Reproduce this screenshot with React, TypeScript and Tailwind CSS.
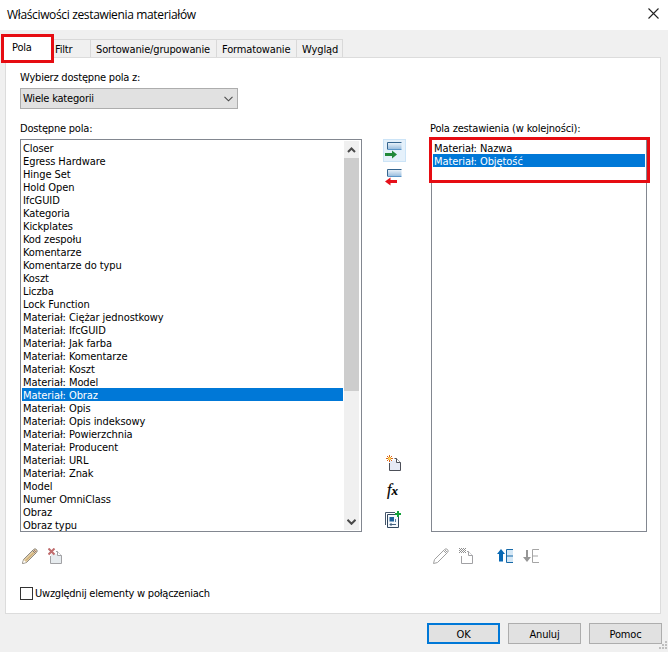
import type { ReactNode } from 'react'
import clsx from 'clsx'

const availableFields = [
  'Closer',
  'Egress Hardware',
  'Hinge Set',
  'Hold Open',
  'IfcGUID',
  'Kategoria',
  'Kickplates',
  'Kod zespołu',
  'Komentarze',
  'Komentarze do typu',
  'Koszt',
  'Liczba',
  'Lock Function',
  'Materiał: Ciężar jednostkowy',
  'Materiał: IfcGUID',
  'Materiał: Jak farba',
  'Materiał: Komentarze',
  'Materiał: Koszt',
  'Materiał: Model',
  'Materiał: Obraz',
  'Materiał: Opis',
  'Materiał: Opis indeksowy',
  'Materiał: Powierzchnia',
  'Materiał: Producent',
  'Materiał: URL',
  'Materiał: Znak',
  'Model',
  'Numer OmniClass',
  'Obraz',
  'Obraz typu',
]

const scheduledFields = ['Materiał: Nazwa', 'Materiał: Objętość']

function FieldList({ items, selected }: { items: string[]; selected: string }) {
  return (
    <ul className="min-w-0 flex-1 tracking-[-0.08px]">
      {items.map((item) => (
        <li
          key={item}
          className={clsx(
            'h-[13px] pl-px leading-[15px] whitespace-nowrap',
            item === selected && 'bg-[#0078d7] text-white'
          )}
        >
          {item}
        </li>
      ))}
    </ul>
  )
}

function Icon({ children, size = 16 }: { children: ReactNode; size?: number }) {
  return (
    <svg width={size} height={size} viewBox={`0 0 ${size} ${size}`} fill="none" className="block shrink-0">
      {children}
    </svg>
  )
}

function RowGlyph() {
  return (
    <>
      <defs>
        <linearGradient id="row" x1="0" y1="0" x2="0" y2="1">
          <stop offset="0" stopColor="#f4f9fd" />
          <stop offset="1" stopColor="#9cbfdf" />
        </linearGradient>
      </defs>
      <path d="M2.5 0h14v7h-14z" fill="url(#row)" />
      <path d="M16.5 .5h-14v7" stroke="#35658f" />
      <path d="M3 7.5h13.5" stroke="#5b96c9" />
    </>
  )
}

function AddFieldIcon() {
  return (
    <Icon size={18}>
      <RowGlyph />
      <path d="M0 11h7V8.500l5 4-5 4V14H0z" fill="#218a3a" />
    </Icon>
  )
}

function RemoveFieldIcon() {
  return (
    <Icon size={18}>
      <RowGlyph />
      <path d="M12 11H5.500V8.500l-5.500 4 5.500 4V14H12z" fill="#e5101a" />
    </Icon>
  )
}

function NewParameterIcon() {
  return (
    <Icon>
      <path d="M3.500 15.500V5.500h7l4 3v7z" fill="#e6eaf5" />
      <path d="M3.500 8v7.500h11v-8l-4-4h-2" stroke="#4c4f58" />
      <path d="M10.500 3.500v4h4" fill="#fff" stroke="#4c4f58" />
      <path d="M3.500 0v7M0 3.500h7M1 1l5 5M6 1L1 6" stroke="#d9651b" />
      <circle cx="3.500" cy="3.500" r="1.500" fill="#ffdf5b" />
    </Icon>
  )
}

function CombineIcon() {
  return (
    <Icon size={17}>
      <path d="M.5 14V1.500H10" stroke="#45566b" />
      <path d="M2.500 3.500h11v13h-11z" fill="#f4f8fc" stroke="#30465e" />
      <path d="M4.500 6H9v4.500H4.500z" fill="#1d5f9a" />
      <path d="M10.500 8v3" stroke="#5780a6" />
      <path d="M5 13.500h6M6.500 12l-1.500 1.500 1.500 1.500" stroke="#44617f" />
      <path d="M13 0v6M10 3h6" stroke="#11a13a" strokeWidth="2" />
    </Icon>
  )
}

function PencilIcon({ muted = false }: { muted?: boolean }) {
  return (
    <Icon>
      <path
        d="M.5 15.500l1-4L11.500 1.500q1.500-1.500 3 0t0 3L4.500 14.500z"
        fill={muted ? '#fff' : '#e2cda3'}
        stroke={muted ? '#a0a0a0' : '#8f8a83'}
      />
      <path d="M10.500 2.500l3 3" stroke={muted ? '#a0a0a0' : '#77777b'} />
      {!muted && <path d="M4 12.500L12 4.500" stroke="#c49a58" />}
      {!muted && <path d="M1 15l.8-3 2.300 2.300z" fill="#fff" />}
      <path d="M12 2l2 2" stroke={muted ? '#a0a0a0' : '#a47974'} />
    </Icon>
  )
}

function DeleteParameterIcon({ muted = false }: { muted?: boolean }) {
  return (
    <Icon>
      <path d="M3 6h7l4 2v7H3z" fill={muted ? '#fff' : '#e6ebee'} />
      <path d="M2.500 8v7.500h11v-8l-4-4H8" stroke="#a1a1a4" />
      <path d="M9.500 3.500v4h4" fill="#fff" stroke="#a1a1a4" />
      {muted ? (
        <path
          d="M0 .5h1M2 .5h1M4 .5h1M6 .5h1M1 1.500h1M3 1.500h1M5 1.500h1M2 2.500h1M4 2.500h1M1 3.500h1M3 3.500h1M5 3.500h1M0 4.500h1M2 4.500h1M4 4.500h1M6 4.500h1M0 2.500h1M6 2.500h1"
          stroke="#8f8f8f"
        />
      ) : (
        <path d="M.5 .5l6 6M6.500 .5l-6 6" stroke="#bf6b6c" strokeWidth="2" />
      )}
    </Icon>
  )
}

function MoveUpIcon() {
  return (
    <Icon>
      <path d="M10 1h6v13h-6z" fill="#d5e8f6" />
      <path d="M16 1.500H9.500v13H16M9.500 8H16" stroke="#1769a8" />
      <path d="M4 1l4 5H6v7.500H2V6H0z" fill="#0869b4" />
    </Icon>
  )
}

function MoveDownIcon() {
  return (
    <Icon>
      <path d="M16 1.500H9.500v13H16M9.500 8H15" stroke="#a5a5a5" />
      <path d="M4 14L0 9h3V2h2v7h3z" fill="#969696" />
    </Icon>
  )
}

function Chevron({ up = false, bold = false }: { up?: boolean; bold?: boolean }) {
  return (
    <svg width="9" height="6" viewBox="0 0 9 6" fill="none" className="block">
      <path d={up ? 'M1 5l3.500-3.500L8 5' : 'M.5 .8l4 4 4-4'} stroke="#4a4a4a" strokeWidth={bold ? 2 : 1.1} />
    </svg>
  )
}

function Scrollbar() {
  return (
    <div className="mr-px ml-px flex w-[15px] flex-col bg-[#f0f0f0]">
      <div className="flex h-[17px] items-center justify-center">
        <Chevron up bold />
      </div>
      <div className="h-[233px] bg-[#cdcdcd]" />
      <div className="mt-auto flex h-[17px] items-center justify-center">
        <Chevron bold />
      </div>
    </div>
  )
}

function Tab({ label, className }: { label: string; className: string }) {
  return (
    <div className={clsx('h-[18px] border-t border-r border-[#d9d9d9] pt-[2px] leading-[15px] whitespace-nowrap', className)}>
      {label}
    </div>
  )
}

function DialogButton({ label, primary = false }: { label: string; primary?: boolean }) {
  return (
    <button
      className={clsx(
        'h-[21px] w-[73px] bg-[#e1e1e1] pt-px',
        primary ? 'border-2 border-[#0078d7] leading-[17px]' : 'border border-[#adadad] leading-[19px]'
      )}
    >
      {label}
    </button>
  )
}

export default function App() {
  return (
    <div className="relative flex h-[652px] w-[668px] flex-col overflow-hidden bg-[#f0f0f0] font-['DejaVu_Sans',sans-serif] text-[11px] tracking-[-0.2px] text-black [font-stretch:condensed]">
      <header className="flex h-[30px] items-center justify-between bg-white pr-[9px] pl-[7px] font-['Open_Sans',sans-serif] text-[12px] tracking-[-0.35px] [font-stretch:normal]">
        <span>Właściwości zestawienia materiałów</span>
        <svg width="11" height="11" viewBox="0 0 11 11" fill="none" className="-mt-[3px]">
          <path d="M.5 .5l10 10M10.500 .5l-10 10" stroke="#222" strokeWidth="1.1" />
        </svg>
      </header>

      {/* Tabs */}
      <nav className="mt-[9px] ml-[5px] flex h-[18px]">
        <div className="relative h-[18px] w-[48px] bg-white">
          <div className="absolute -top-[5px] -left-1 h-[29px] w-[53px] border-[3px] border-[#e60c12] bg-white pt-[3px] pl-2 leading-[15px]">
            Pola
          </div>
        </div>
        <Tab label="Filtr" className="w-[38px] pl-[2px]" />
        <Tab label="Sortowanie/grupowanie" className="w-[126px] pl-[5px] tracking-[-0.15px]" />
        <Tab label="Formatowanie" className="w-[80px] pl-[5px] tracking-[-0.15px]" />
        <Tab label="Wygląd" className="w-[46px] pl-[5px] tracking-[-0.1px]" />
      </nav>

      <main className="ml-[5px] flex h-[557px] w-[656px] flex-col border border-[#dcdcdc] bg-white pl-[14px]">
        <div className="mt-[12px] h-[15px] leading-[15px]">Wybierz dostępne pola z:</div>
        <div className="mt-[3px] flex h-[21px] w-[218px] items-center justify-between border border-[#adadad] bg-[#e1e1e1] pr-1 pl-[2px]">
          <span className="pt-[2px]">Wiele kategorii</span>
          <Chevron />
        </div>

        <div className="mt-[11px] flex">
          <section className="w-[342px]">
            <div className="h-[15px] leading-[17px]">Dostępne pola:</div>
            <div className="mt-[4px] flex h-[393px] border border-[#828790] p-px">
              <FieldList items={availableFields} selected="Materiał: Obraz" />
              <Scrollbar />
            </div>
            <div className="mt-[16px] flex gap-[10px] pl-[2px]">
              <PencilIcon />
              <DeleteParameterIcon />
            </div>
          </section>

          <div className="ml-[21px] flex w-[23px] flex-col pt-[19px]">
            <div className="flex h-[23px] w-[23px] border border-[#cce4f7] bg-[#e5f1fb] pt-[2px] pl-px">
              <AddFieldIcon />
            </div>
            <div className="mt-[7px] ml-[2px]">
              <RemoveFieldIcon />
            </div>
            <div className="mt-[268px] ml-[3px]">
              <NewParameterIcon />
            </div>
            <div className="mt-[9px] ml-1 h-[21px] font-['Liberation_Serif',serif] text-[16px] leading-[20px] tracking-[0px] italic [-webkit-text-stroke:0.2px_#000]">
              f<span className="text-[13px] font-bold">x</span>
            </div>
            <div className="mt-[10px] ml-[2px]">
              <CombineIcon />
            </div>
          </div>

          <section className="ml-[25px] w-[216px]">
            <div className="-ml-px h-[15px] leading-[17px] tracking-[-0.18px] whitespace-nowrap">Pola zestawienia (w kolejności):</div>
            <div className="relative mt-[4px] flex h-[393px] border border-[#828790] p-px">
              <FieldList items={scheduledFields} selected="Materiał: Objętość" />
              <div className="absolute -top-[3px] -left-[3px] h-[46px] w-[221px] border-[3px] border-[#e60c12]" />
            </div>
            <div className="mt-[16px] flex pl-[2px]">
              <PencilIcon muted />
              <div className="ml-[10px]">
                <DeleteParameterIcon muted />
              </div>
              <div className="ml-[22px]">
                <MoveUpIcon />
              </div>
              <div className="ml-[10px]">
                <MoveDownIcon />
              </div>
            </div>
          </section>
        </div>

        <label className="mt-[22px] flex h-[15px] items-center gap-[2px] tracking-[-0.23px]">
          <span className="h-[13px] w-[13px] border border-[#333] bg-white" />
          <span className="pt-[2px]">Uwzględnij elementy w połączeniach</span>
        </label>
      </main>

      <footer className="mt-[9px] flex justify-end gap-2 pr-[6px]">
        <DialogButton label="OK" primary />
        <DialogButton label="Anuluj" />
        <DialogButton label="Pomoc" />
      </footer>

      {/* Resize grip */}
      <svg width="9" height="9" viewBox="0 0 9 9" className="absolute right-0 bottom-[2px]">
        <path d="M6 0h2v2H6zM3 3h2v2H3zM6 3h2v2H6zM0 6h2v2H0zM3 6h2v2H3zM6 6h2v2H6z" fill="#bfbfbf" />
      </svg>
    </div>
  )
}
